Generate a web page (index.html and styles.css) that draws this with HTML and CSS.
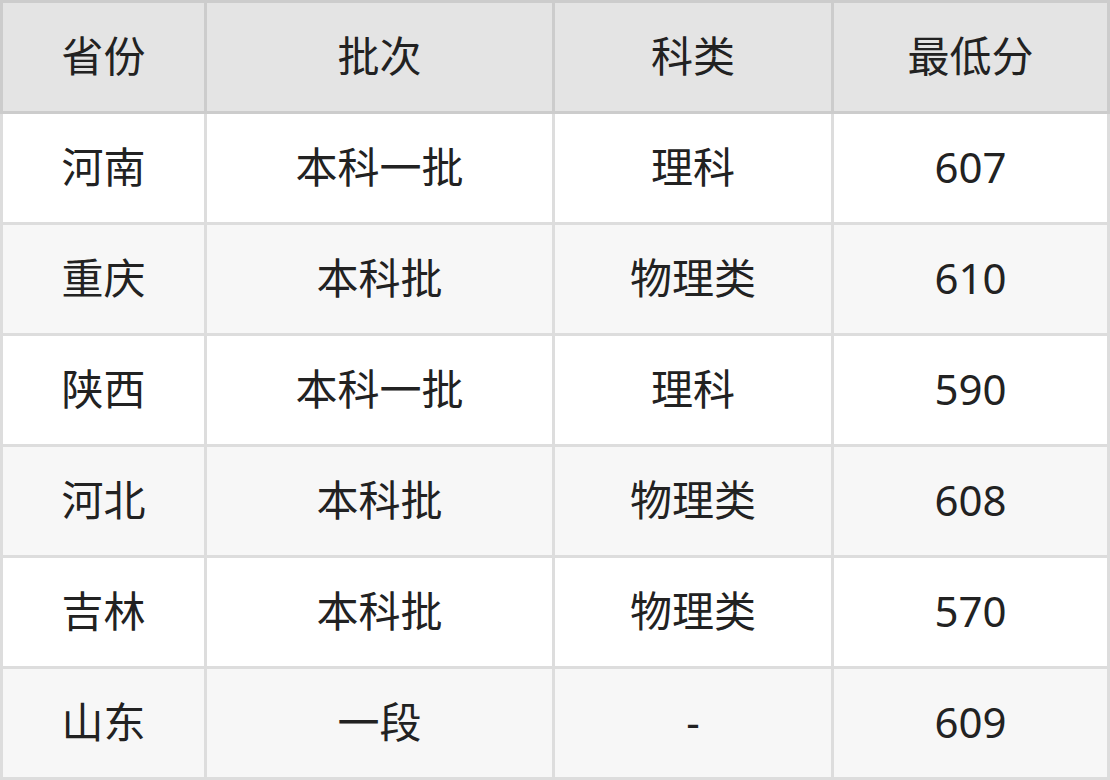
FILE: index.html
```html
<!DOCTYPE html>
<html lang="zh-CN">
<head>
<meta charset="utf-8">
<title>最低分</title>
<link rel="stylesheet" href="styles.css">
</head>
<body>
<table class="score-table">
  <colgroup>
    <col class="c1"><col class="c2"><col class="c3"><col class="c4">
  </colgroup>
  <thead>
    <tr><th>省份</th><th>批次</th><th>科类</th><th>最低分</th></tr>
  </thead>
  <tbody>
    <tr><td>河南</td><td>本科一批</td><td>理科</td><td>607</td></tr>
    <tr><td>重庆</td><td>本科批</td><td>物理类</td><td>610</td></tr>
    <tr><td>陕西</td><td>本科一批</td><td>理科</td><td>590</td></tr>
    <tr><td>河北</td><td>本科批</td><td>物理类</td><td>608</td></tr>
    <tr><td>吉林</td><td>本科批</td><td>物理类</td><td>570</td></tr>
    <tr><td>山东</td><td>一段</td><td>-</td><td>609</td></tr>
  </tbody>
</table>
</body>
</html>
```
FILE: styles.css
```css
html, body {
  margin: 0;
  padding: 0;
  background: #ffffff;
}
.score-table {
  width: 1110px;
  table-layout: fixed;
  border-collapse: collapse;
  font-family: "Noto Sans", "Noto Sans CJK SC", sans-serif;
  font-size: 42px;
  line-height: 1.2;
  color: #222222;
}
.c1 { width: 204px; }
.c2 { width: 348px; }
.c3 { width: 279px; }
.c4 { width: 276px; }
.score-table tr { height: 111px; }
.score-table th,
.score-table td {
  padding: 0 0 2px 0;
  text-align: center;
  vertical-align: middle;
  border: 3px solid #dddddd;
  font-weight: 400;
}
.score-table th {
  background: #e4e4e4;
  border-color: #cccccc;
}
.score-table tbody tr:nth-child(even) td {
  background: #f7f7f7;
}
```
